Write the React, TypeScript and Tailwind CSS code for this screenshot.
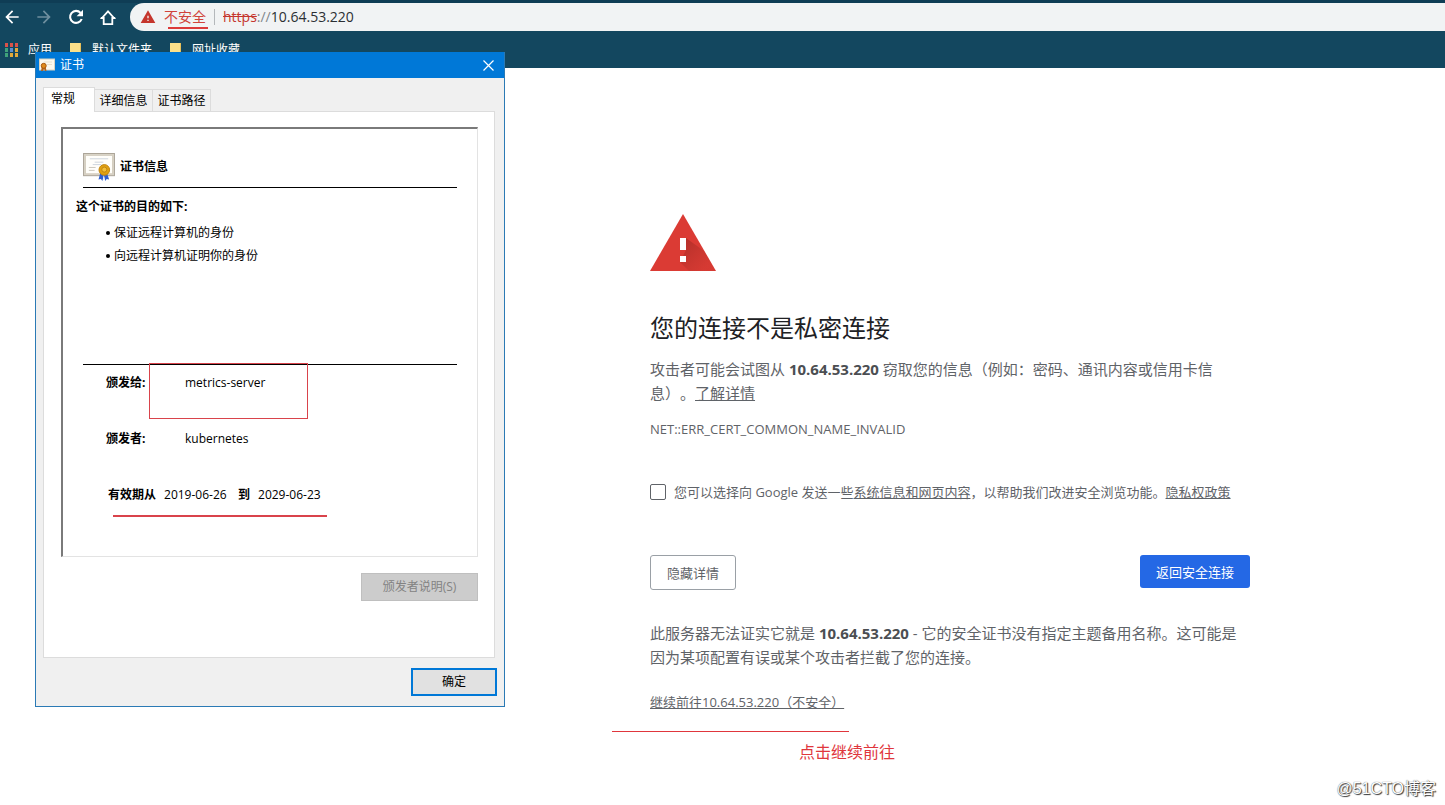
import { MdArrowBack, MdArrowForward, MdWarning } from "react-icons/md";

const sans = "font-['Open_Sans','Noto_Sans_CJK_SC',sans-serif] [text-spacing-trim:space-all]";

function ReloadIcon() {
  return (
    <svg viewBox="0 0 20 20" className="size-5" fill="none" stroke="currentColor" strokeWidth="2.100">
      <path d="M14.600 5.900A6 6 0 1 0 15.700 12" />
      <path d="M17 2.800v6.400h-6.400z" fill="currentColor" stroke="none" />
    </svg>
  );
}

function HomeIcon() {
  return (
    <svg viewBox="0 0 20 20" className="size-5" fill="none" stroke="currentColor" strokeWidth="1.800">
      <path d="M4 10.800h1.700v6.200h8.600v-6.200H16L10 4.200z" transform="translate(0 .2)" />
      <path d="M2.800 11h2.800M14.400 11h2.800" />
    </svg>
  );
}

function AppsIcon() {
  const colors = [
    "#d9534a", "#d9534a", "#d9534a",
    "#3fa27a", "#5b8fd0", "#e0a93a",
    "#3fa27a", "#e0a93a", "#e0a93a",
  ];
  return (
    <svg viewBox="0 0 14 14" className="size-3.5">
      {colors.map((c, i) => (
        <rect key={i} x={(i % 3) * 5 + 1} y={Math.floor(i / 3) * 5} width="3" height="4" fill={c} />
      ))}
    </svg>
  );
}

function FolderIcon() {
  return (
    <svg viewBox="0 0 12 14" className="h-3.5 w-3">
      <path d="M0 0h11v12H0z" fill="#fce08a" />
      <path d="M10 0h1v12h-1z" fill="#e8c05a" />
    </svg>
  );
}

function CertificateIcon() {
  return (
    <svg viewBox="0 0 33 29" className="h-7 w-8 shrink-0">
      <rect x="0.500" y="0.500" width="32" height="23" fill="#d9d3c6" stroke="#aaa396" />
      <rect x="2.500" y="2.500" width="28" height="19" fill="#fffefa" stroke="#d4cec0" />
      <path d="M7 6h19M12 9.500h9M10 12h9" stroke="#ccd3dc" />
      <path d="M6 15h7M6 18h6" stroke="#cbc6bb" />
      <path d="m18 20-2 7.500 2.500-.5 1.500 2 1.500-6 1.500 6 1.500-2 2.500.5-2.500-7.500z" fill="#2f5fd0" />
      <path d="m21.500 22-.7 6h1.400z" fill="#dfe8fb" />
      <circle cx="22" cy="17.500" r="5.500" fill="#e0a010" stroke="#c08410" />
      <circle cx="22" cy="17.200" r="2.600" fill="#f3bf38" stroke="#b47a10" strokeWidth="0.800" />
    </svg>
  );
}

function SmallCertificateIcon() {
  return (
    <svg viewBox="0 0 16 14" className="h-3.5 w-4 shrink-0">
      <rect x="0.500" y="1" width="15" height="11" fill="#fbf8ee" stroke="#d8d2c0" />
      <path d="M5 4h8M8 6.500h5" stroke="#e6e0cf" />
      <path d="m3 8-1 5h2l1-2 1 2h1.500L6.500 8z" fill="#b5651d" />
      <circle cx="4.700" cy="7.800" r="2.500" fill="#e08a1a" stroke="#a85a10" />
    </svg>
  );
}

function BrowserBar() {
  return (
    <header className="border-t-[3px] border-[#0f3d55] bg-[#13475f] text-white">
      <div className="flex h-7 items-center">
        <nav className="flex w-[130px] shrink-0 items-center gap-3 pl-0.5">
          <button aria-label="后退"><MdArrowBack className="size-5" /></button>
          <button aria-label="前进" className="text-[#6f8f9f]"><MdArrowForward className="size-5" /></button>
          <button aria-label="重新加载"><ReloadIcon /></button>
          <button aria-label="主页"><HomeIcon /></button>
        </nav>
        <div className="flex h-full min-w-0 flex-1 items-center rounded-l-full bg-[#f1f3f4] pl-2.5 text-sm">
          <MdWarning className="size-4 text-[#c5362d]" />
          <span className="relative ml-2 text-[#d0433b]">
            不安全
            <span className="absolute top-5 left-1 h-0.5 w-10 bg-[#dc3a3a]" />
          </span>
          <span className="mx-2 h-4 w-px bg-[#b4b8bb]" />
          <span className="text-[#c5362d] line-through">https</span>
          <span className="text-[#80868b]">://</span>
          <span className="text-[#2b2f33]">10.64.53.220</span>
        </div>
      </div>
      <div className="flex h-[37px] items-center pl-1 text-xs">
        <a href="#apps" className="flex w-[66px] items-center gap-2.5"><AppsIcon />应用</a>
        <a href="#default" className="flex w-[100px] items-center gap-2.5"><FolderIcon />默认文件夹</a>
        <a href="#sites" className="flex items-center gap-2.5"><FolderIcon />网址收藏</a>
      </div>
    </header>
  );
}

function CertificateDialog() {
  return (
    <section
      role="dialog"
      aria-label="证书"
      className="absolute top-[52px] left-[35px] w-[470px] border border-t-0 border-[#2b7ab5] bg-[#f0f0f0] text-xs text-black"
    >
      <div className="flex h-[26px] items-center bg-[#0078d7] pl-[3px] text-white">
        <SmallCertificateIcon />
        <h2 className="ml-[5px] flex-1">证书</h2>
        <button aria-label="关闭" className="flex h-full w-8 items-center justify-center">
          <svg viewBox="0 0 11 11" className="size-[11px]" stroke="currentColor" strokeWidth="1.200">
            <path d="m.5.5 10 10M10.500.500l-10 10" />
          </svg>
        </button>
      </div>

      <div className="pt-[9px] pr-[9px] pl-[7px]">
        <div role="tablist" className="flex items-end">
          <button role="tab" aria-selected="true" className="relative z-10 -mb-px h-[25px] w-[52px] border border-b-0 border-[#dcdcdc] bg-white pr-3 pb-0.5">
            常规
          </button>
          <button role="tab" aria-selected="false" className="h-[22px] w-[58px] border-t border-r border-[#dcdcdc]">
            详细信息
          </button>
          <button role="tab" aria-selected="false" className="h-[22px] w-[58px] border-t border-r border-[#dcdcdc]">
            证书路径
          </button>
        </div>

        <div role="tabpanel" className="border border-[#dcdcdc] bg-white pt-[15px] pr-4 pb-14 pl-[17px]">
          <div className="border-t-2 border-r border-b border-l-2 border-t-[#7a7a7a] border-r-[#e3e3e3] border-b-[#e3e3e3] border-l-[#7a7a7a]">
            <div className="mx-5 flex items-center gap-[5px] border-b border-black pt-6 pb-1.5 font-bold">
              <CertificateIcon />
              <h3>证书信息</h3>
            </div>
            <p className="mt-[9px] ml-[13px] leading-5 font-bold">这个证书的目的如下:</p>
            <ul className="mt-1 ml-[43px] leading-[23px]">
              <li className="flex items-center gap-1"><span className="size-1 rounded-full bg-black" />保证远程计算机的身份</li>
              <li className="flex items-center gap-1"><span className="size-1 rounded-full bg-black" />向远程计算机证明你的身份</li>
            </ul>
            <dl className="relative mx-5 mt-[97px] flex flex-col gap-9 border-t border-black pt-2 pb-[51px] pl-[23px] leading-5">
              <div className="flex">
                <dt className="w-[79px] font-bold">颁发给:</dt>
                <dd>metrics-server</dd>
              </div>
              <div className="flex">
                <dt className="w-[79px] font-bold">颁发者:</dt>
                <dd>kubernetes</dd>
              </div>
              <div className="flex gap-2 pl-0.5">
                <dt className="font-bold">有效期从</dt>
                <dd className="w-[66px]">2019-06-26</dd>
                <dt className="font-bold">到</dt>
                <dd className="w-[66px]">2029-06-23</dd>
              </div>
              <span className="absolute -top-0.5 left-[66px] h-14 w-[159px] border border-[#d9434b]" />
              <span className="absolute top-[150px] left-[30px] h-0.5 w-[214px] bg-[#d9434b]" />
            </dl>
          </div>
          <div className="mt-4 flex justify-end">
            <button disabled className="h-7 w-[117px] border border-[#bfbfbf] bg-[#cccccc] text-[#838383]">
              颁发者说明(S)
            </button>
          </div>
        </div>
      </div>

      <div className="flex justify-end py-2.5 pr-[7px]">
        <button className="h-7 w-[86px] border-2 border-[#0078d7] bg-[#e1e1e1]">确定</button>
      </div>
    </section>
  );
}

function WarningTriangle() {
  return (
    <svg viewBox="0 0 66 57" className="h-[57px] w-[66px]">
      <defs>
        <linearGradient id="shade" gradientUnits="userSpaceOnUse" x1="33" y1="30" x2="56" y2="53">
          <stop offset="0" stopColor="#a82c26" stopOpacity="0.700" />
          <stop offset="1" stopColor="#b8322b" stopOpacity="0.150" />
        </linearGradient>
      </defs>
      <path d="M33 0 66 57H0z" fill="#db3b34" />
      <path d="m36 24 18 13 11.500 20H39l-9-9 6-12z" fill="url(#shade)" />
      <path d="M30 24h6v12h-6zM30 42h6v6h-6z" fill="#fff" />
    </svg>
  );
}

function PrivacyError() {
  return (
    <main className="ml-[650px] max-w-[600px] pt-[146px] text-[15px] leading-6 text-[#5f6368]">
      <WarningTriangle />
      <h1 className="mt-[39px] text-2xl leading-9 text-[#202124]">您的连接不是私密连接</h1>
      <p className="mt-[11px]">
        攻击者可能会试图从 <strong className="text-[#4b4e52]">10.64.53.220</strong> 窃取您的信息（例如：密码、通讯内容或信用卡信息）。
        <a href="#learn" className="underline">了解详情</a>
      </p>
      <p className="mt-3.5 text-[13px] leading-5">NET::ERR_CERT_COMMON_NAME_INVALID</p>
      <div className="mt-[43px] flex items-center gap-2 text-[13px] leading-5">
        <input
          id="report"
          type="checkbox"
          className="size-4 shrink-0 appearance-none rounded-[2px] border border-[#5f6368] bg-white checked:bg-[#5f6368]"
        />
        <label htmlFor="report" className="whitespace-nowrap">
          您可以选择向 Google 发送一些<a href="#system" className="underline">系统信息和网页内容</a>，以帮助我们改进安全浏览功能。<a href="#privacy" className="underline">隐私权政策</a>
        </label>
      </div>
      <div className="mt-[53px] flex items-start justify-between text-[13px]">
        <button className="h-[35px] rounded-[3px] border border-[#9aa0a6] px-4">隐藏详情</button>
        <button className="h-[33px] rounded-[3px] bg-[#2468e5] px-4 text-white">返回安全连接</button>
      </div>
      <p className="mt-[31px]">
        此服务器无法证实它就是 <strong className="text-[#4b4e52]">10.64.53.220</strong> - 它的安全证书没有指定主题备用名称。这可能是因为某项配置有误或某个攻击者拦截了您的连接。
      </p>
      <p className="relative mt-[23px] text-[13px] leading-5">
        <a href="#proceed" className="underline">继续前往10.64.53.220（不安全）</a>
        <span className="absolute top-[39px] -left-[38px] h-px w-[237px] bg-[#e0363c]" />
        <span className="absolute top-12 left-[149px] text-base leading-6 whitespace-nowrap text-[#e0363c]">点击继续前往</span>
      </p>
    </main>
  );
}

export default function App() {
  return (
    <div className={`relative min-h-screen bg-white ${sans}`}>
      <BrowserBar />
      <PrivacyError />
      <CertificateDialog />
      <span className="absolute right-[9px] bottom-1 font-['Liberation_Sans','Noto_Sans_CJK_SC',sans-serif] text-base leading-6 text-white [text-shadow:1px_1px_1px_#333,0_0_1px_#444]">
        @51CTO博客
      </span>
    </div>
  );
}
